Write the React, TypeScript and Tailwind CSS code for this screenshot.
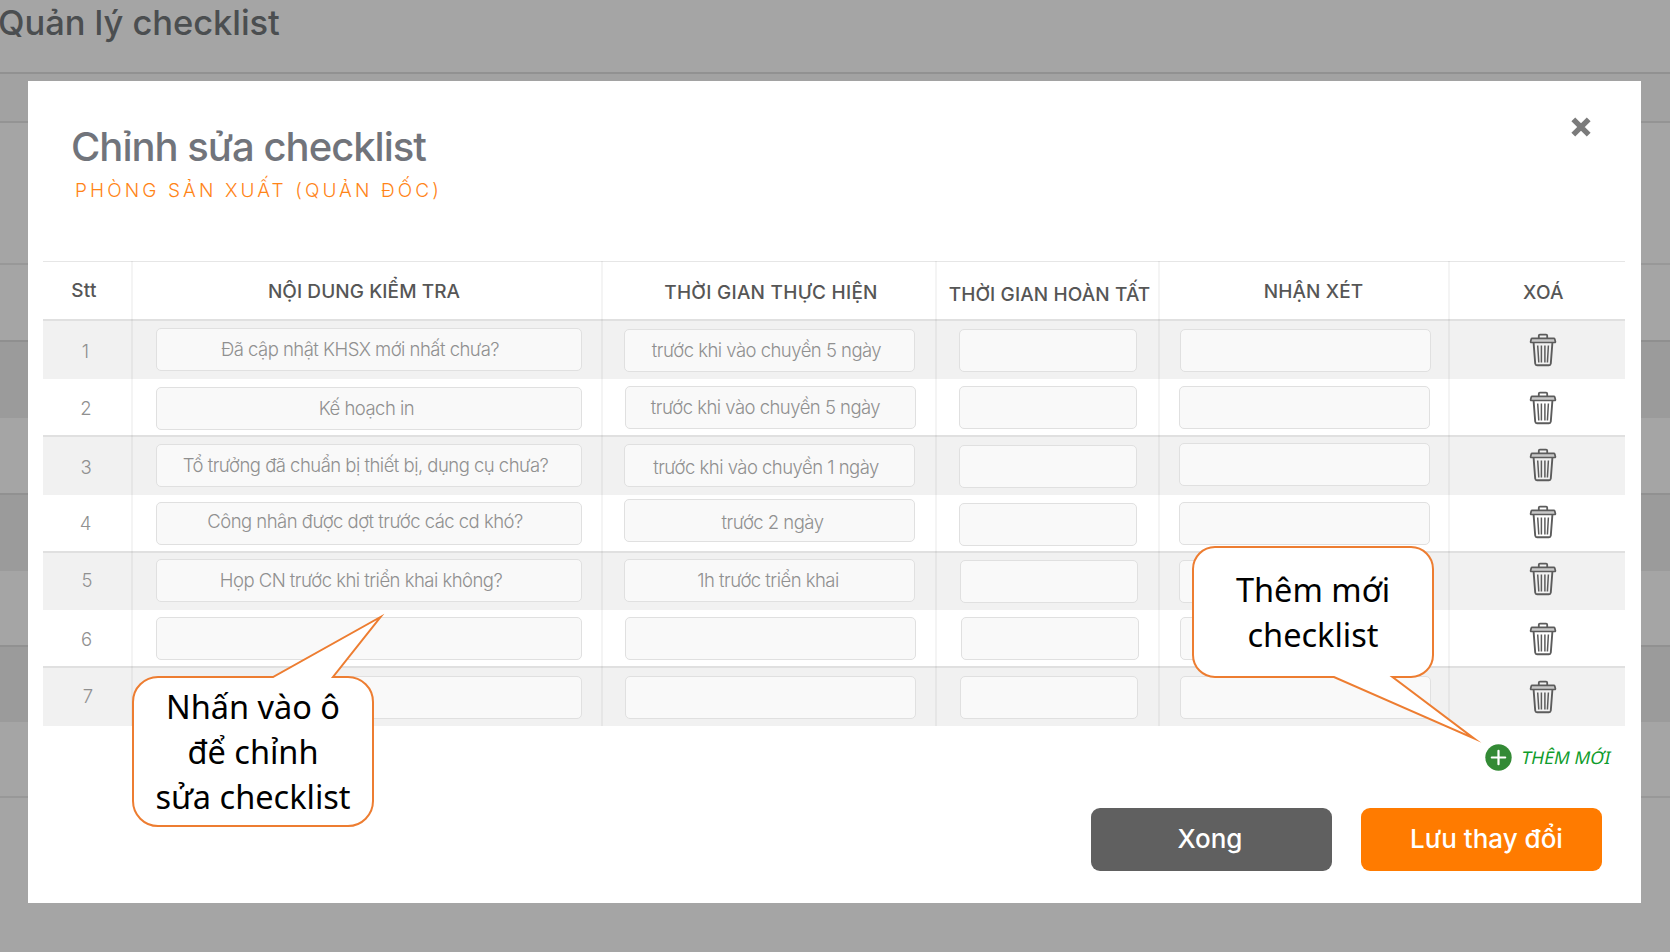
type Field = { text?: string; box: string };
type Row = { no: number; noPad: string; row: string; trash: string; fields: Field[] };

const BAND = 'bg-[#f1f1f1] shadow-[inset_0_2px_0_#e0e0e0]';

const rows: Row[] = [
  {
    no: 1, noPad: 'pr-[3px] pt-1', row: `h-[60px] ${BAND}`, trash: 'mt-[14px]',
    fields: [
      { text: 'Đã cập nhật KHSX mới nhất chưa?', box: 'ml-[23px] mt-[9px] pr-[18px] pb-px' },
      { text: 'trước khi vào chuyền 5 ngày', box: 'ml-[21px] mt-[10px] pr-[6px] pb-[2px]' },
      { box: 'ml-[22px] mt-[10px]' },
      { box: 'ml-[20px] mt-[10px]' },
    ],
  },
  {
    no: 2, noPad: 'pr-0.5 pt-[2px]', row: 'h-[56px]', trash: 'mt-[12px]',
    fields: [
      { text: 'Kế hoạch in', box: 'ml-[23px] mt-[8px] pr-[5px] pb-[2px]' },
      { text: 'trước khi vào chuyền 5 ngày', box: 'ml-[22px] mt-[7px] pr-[10px] pb-[2px]' },
      { box: 'ml-[22px] mt-[7px]' },
      { box: 'ml-[19px] mt-[7px]' },
    ],
  },
  {
    no: 3, noPad: 'pr-0.5 pt-[3px]', row: `h-[60px] ${BAND}`, trash: 'mt-[13px]',
    fields: [
      { text: 'Tổ trưởng đã chuẩn bị thiết bị, dụng cụ chưa?', box: 'ml-[23px] mt-[9px] pr-[7px] pb-[2px]' },
      { text: 'trước khi vào chuyền 1 ngày', box: 'ml-[21px] mt-[9px] pr-[7px] pt-[2px]' },
      { box: 'ml-[22px] mt-[10px]' },
      { box: 'ml-[19px] mt-[8px]' },
    ],
  },
  {
    no: 4, noPad: 'pr-[3px]', row: 'h-[56px]', trash: 'mt-[10px]',
    fields: [
      { text: 'Công nhân được dợt trước các cd khó?', box: 'ml-[23px] mt-[7px] pr-[8px] pb-[5px]' },
      { text: 'trước 2 ngày', box: 'ml-[21px] mt-[4px] pl-[6px] pt-[3px]' },
      { box: 'ml-[22px] mt-[8px]' },
      { box: 'ml-[19px] mt-[7px]' },
    ],
  },
  {
    no: 5, noPad: 'pb-[2px]', row: `h-[59px] ${BAND}`, trash: 'mt-[11px]',
    fields: [
      { text: 'Họp CN trước khi triển khai không?', box: 'ml-[23px] mt-[8px] pr-[16px] pb-[2px]' },
      { text: '1h trước triển khai', box: 'ml-[21px] mt-[8px] pr-[3px] pb-[2px]' },
      { box: 'ml-[23px] mt-[9px]' },
      { box: 'ml-[19px] mt-[9px]' },
    ],
  },
  {
    no: 6, noPad: 'pt-[2px] pr-px', row: 'h-[56px]', trash: 'mt-[12px]',
    fields: [
      { box: 'ml-[23px] mt-[7px]' },
      { box: 'ml-[22px] mt-[7px]' },
      { box: 'ml-[24px] mt-[7px]' },
      { box: 'ml-[20px] mt-[7px]' },
    ],
  },
  {
    no: 7, noPad: 'pl-0.5', row: `h-[60px] ${BAND}`, trash: 'mt-[14px]',
    fields: [
      { box: 'ml-[23px] mt-[10px]' },
      { box: 'ml-[22px] mt-[10px]' },
      { box: 'ml-[23px] mt-[10px]' },
      { box: 'ml-[20px] mt-[10px]' },
    ],
  },
];

const fieldWidths = ['w-[426px]', 'w-[291px]', 'w-[178px]', 'w-[251px]'];

const headers = [
  { label: 'Stt', pad: 'pr-[6px] pt-[2px] tracking-[0.3px]' },
  { label: 'NỘI DUNG KIỂM TRA', pad: 'pr-[6px] pt-[4px] tracking-[0.08px]' },
  { label: 'THỜI GIAN THỰC HIỆN', pad: 'pl-[4px] pt-[5px] tracking-[0.27px]' },
  { label: 'THỜI GIAN HOÀN TẤT', pad: 'pl-[4px] pt-[9px] tracking-[0.12px]' },
  { label: 'NHẬN XÉT', pad: 'pl-[19px] pt-[3px] tracking-[0.1px]' },
  { label: 'XOÁ', pad: 'pl-[12px] pt-[5px] tracking-[0.3px]' },
];

const GRID = 'grid grid-cols-[88px_470px_334px_223px_290px_177px]';
const DIVIDER = 'border-l-2 border-black/[0.045]';

function TrashIcon() {
  return (
    <svg width="28" height="34" viewBox="0 0.5 28 34" fill="none" stroke="#5c5c5c">
      <path d="M9.8 5.6V3.2Q9.8 2.1 10.9 2.1H17.1Q18.2 2.1 18.2 3.2V5.6" strokeWidth="1.8" />
      <path d="M3.2 5.9H24.8Q25.6 5.9 25.8 6.7L26.4 9.2Q26.5 10 25.8 10H2.2Q1.5 10 1.6 9.2L2.2 6.7Q2.4 5.9 3.2 5.9Z" fill="#c9c9c9" strokeWidth="1.7" />
      <path d="M4.6 10.2L6.2 31Q6.4 32.7 8 32.7H20Q21.6 32.7 21.8 31L23.4 10.2" strokeWidth="1.9" />
      <path d="M8.7 13L9.8 30M12.4 13V30M15.9 13V30M19.4 13L18.4 30" strokeWidth="1.5" />
    </svg>
  );
}

function Backdrop() {
  return (
    <div className="flex h-[952px] flex-col bg-[#a5a5a5]">
      <header className="flex h-[72px] items-start">
        <h1 className="-ml-[2px] text-[34.5px] leading-[46px] font-medium tracking-[-0.05px] whitespace-nowrap text-[#4b4e50]">Quản lý checklist</h1>
      </header>
      <div className="h-[49px] border-t-2 border-[#919191] bg-[#a2a2a2]" />
      <div className="h-[142px] border-t-2 border-[#949494]" />
      <div className="h-[77px] border-t-2 border-[#989898]" />
      <div className="h-[78px] border-t-2 border-[#8f8f8f] bg-[#9b9b9b]" />
      <div className="h-[75px]" />
      <div className="h-[78px] border-t-2 border-[#919191] bg-[#9b9b9b]" />
      <div className="h-[74px]" />
      <div className="h-[77px] border-t-2 border-[#919191] bg-[#9b9b9b]" />
      <div className="h-[74px]" />
      <div className="flex-1 border-t-2 border-[#989898]" />
    </div>
  );
}

function Table() {
  return (
    <div className="ml-[15px] w-[1582px]">
      <div className={`${GRID} h-[58px] shadow-[inset_0_1px_0_#e6e6e6]`}>
        {headers.map((h, i) => (
          <div
            key={h.label}
            className={`flex items-center justify-center text-[19px] leading-6 font-medium whitespace-nowrap text-[#565656] ${h.pad} ${i ? DIVIDER : ''}`}
          >
            {h.label}
          </div>
        ))}
      </div>
      {rows.map((r) => (
        <div key={r.no} className={`${GRID} ${r.row}`}>
          <div className={`flex items-center justify-center text-[18.5px] leading-6 font-light text-[#909090] ${r.noPad}`}>{r.no}</div>
          {r.fields.map((f, i) => (
            <div key={i} className={DIVIDER}>
              <div
                className={`flex h-[43px] items-center justify-center rounded-[5px] border-[1.5px] border-[#e0e0e0] bg-[#f9f9f9] text-[18.5px] leading-6 font-light tracking-[-0.52px] whitespace-nowrap text-[#909090] ${fieldWidths[i]} ${f.box}`}
              >
                {f.text}
              </div>
            </div>
          ))}
          <div className={DIVIDER}>
            <button type="button" aria-label="Xoá" className={`ml-[79px] block ${r.trash}`}>
              <TrashIcon />
            </button>
          </div>
        </div>
      ))}
    </div>
  );
}

function Modal() {
  return (
    <section className="absolute top-[81px] left-[28px] h-[822px] w-[1613px] bg-white">
      <div className="flex h-[180px] justify-between pt-[42px] pr-[50px] pl-[43px]">
        <div>
          <h2 className="mb-px text-[40px] leading-[48px] font-medium tracking-[-1px] text-[#71747b]">Chỉnh sửa checklist</h2>
          <p className="mt-2 ml-[4px] text-[19px] leading-6 font-light tracking-[3.1px] text-[#ff8417]">PHÒNG SẢN XUẤT (QUẢN ĐỐC)</p>
        </div>
        <button type="button" aria-label="Đóng" className="-mt-[6px] h-5 w-5">
          <svg width="20" height="20" viewBox="0 0 20 20" stroke="#7b7b7b" strokeWidth="5.4">
            <path d="M2.3 2.3L17.7 17.7M17.7 2.3L2.3 17.7" />
          </svg>
        </button>
      </div>
      <Table />
      <div className="mt-[18px] flex h-[27px] items-center justify-end gap-[10px] pr-[30px]">
        <svg width="27" height="27" viewBox="0 0 27 27">
          <circle cx="13.5" cy="13.5" r="13.2" fill="#338a35" />
          <path d="M13.5 6.8V20.2M6.8 13.5H20.2" stroke="#fff" strokeWidth="2.2" strokeLinecap="round" />
        </svg>
        <span className="-skew-x-12 pb-px font-['Noto_Sans',sans-serif] text-[17.5px] leading-6 text-[#0e9c2c]">THÊM MỚI</span>
      </div>
      <div className="mt-[37px] flex justify-end gap-[29px] pr-[39px] text-[26px] leading-8 font-medium text-white">
        <button type="button" className="h-[63px] w-[241px] rounded-[9px] bg-[#606060] pr-[3px] pb-[2px]">Xong</button>
        <button type="button" className="h-[63px] w-[241px] rounded-[9px] bg-[#ff7b00] pb-[2px] pl-[10px]">Lưu thay đổi</button>
      </div>
    </section>
  );
}

function Callouts() {
  return (
    <>
      <svg className="absolute top-0 left-0" width="1670" height="952" fill="#fff" stroke="#ed7d31" strokeWidth="2" strokeMiterlimit="20">
        <path d="M158 677H273L380.5 617L333 677H348A25 25 0 0 1 373 702V801A25 25 0 0 1 348 826H158A25 25 0 0 1 133 801V702A25 25 0 0 1 158 677Z" />
        <path d="M1215 547H1411A22 22 0 0 1 1433 569V655A22 22 0 0 1 1411 677H1392.5L1474 738.5L1334 677H1215A22 22 0 0 1 1193 655V569A22 22 0 0 1 1215 547Z" />
      </svg>
      <p className="absolute top-[684px] left-[133px] w-[240px] text-center font-['Noto_Sans',sans-serif] text-[32.5px] leading-[45px] text-black">
        Nhấn vào ô
        <br />
        để chỉnh
        <br />
        sửa checklist
      </p>
      <p className="absolute top-[567px] left-[1193px] w-[240px] text-center font-['Noto_Sans',sans-serif] text-[32.5px] leading-[45px] text-black">
        Thêm mới
        <br />
        checklist
      </p>
    </>
  );
}

export default function App() {
  return (
    <main className="relative h-[952px] w-full overflow-hidden font-['Inter',sans-serif]">
      <Backdrop />
      <Modal />
      <Callouts />
    </main>
  );
}
